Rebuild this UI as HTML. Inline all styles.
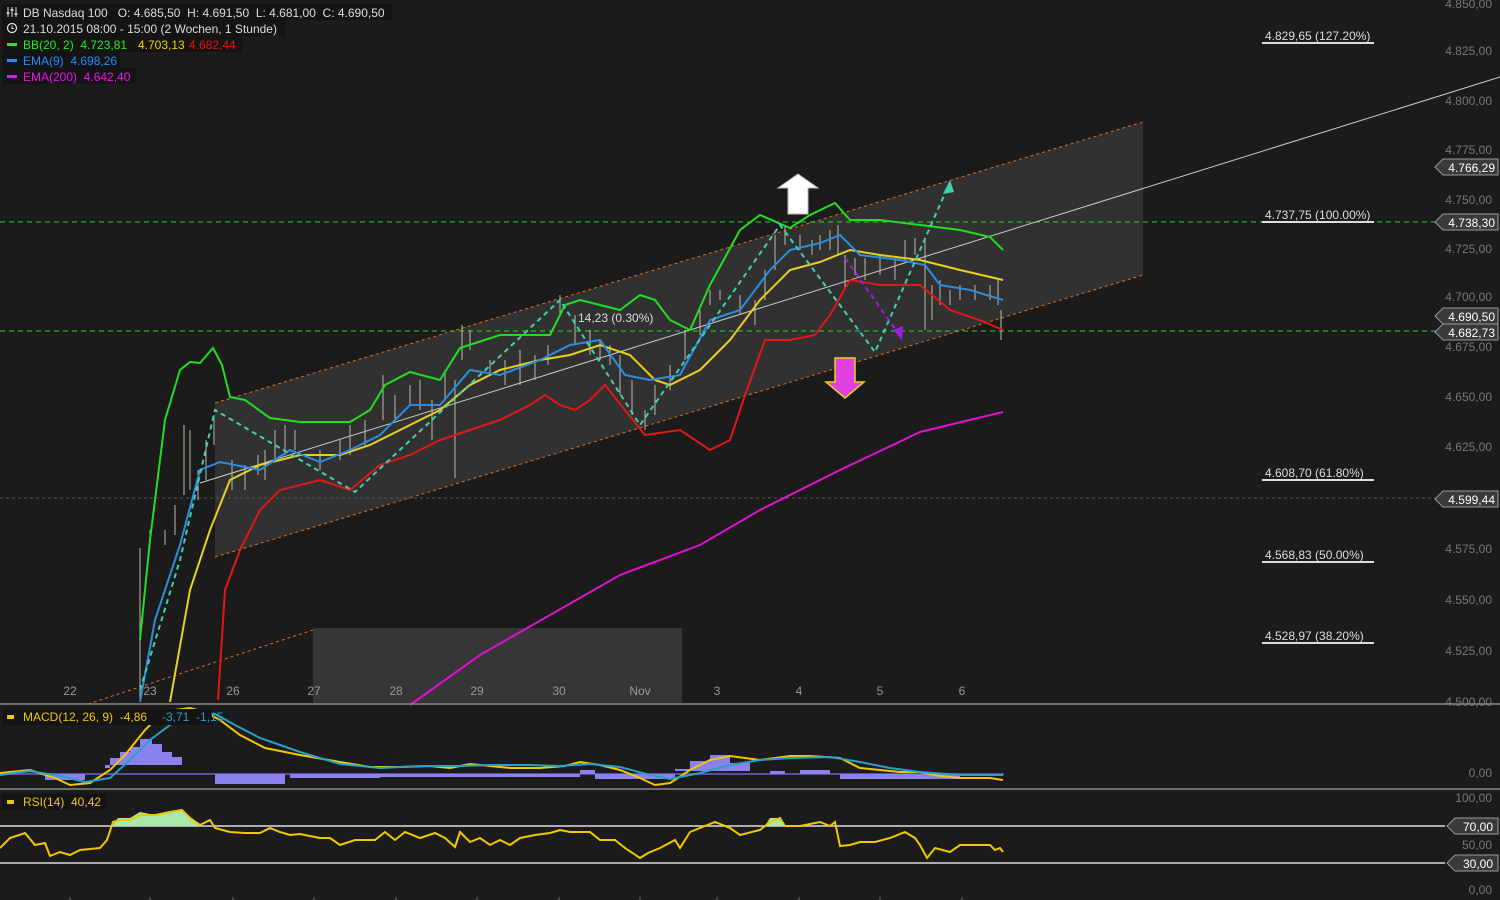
<!DOCTYPE html><html><head><style>
html,body{margin:0;padding:0;background:#1c1b1b;width:1500px;height:900px;overflow:hidden;font-family:"Liberation Sans",sans-serif}
svg{display:block}
text{font-family:"Liberation Sans",sans-serif;white-space:pre}
</style></head><body>
<svg width="1500" height="900" viewBox="0 0 1500 900" xmlns="http://www.w3.org/2000/svg" xml:space="preserve">
<rect width="1500" height="900" fill="#1c1b1b"/>
<polygon points="215,403 1143,122 1143,275 215,557" fill="#3a3a3a" opacity="0.75"/>
<rect x="313" y="628" width="369" height="75" fill="#363636"/>
<line x1="215" y1="403" x2="1143" y2="122" stroke="#e07020" stroke-dasharray="3,3"/>
<line x1="215" y1="557" x2="1143" y2="275" stroke="#e07020" stroke-dasharray="3,3"/>
<line x1="88" y1="704" x2="313" y2="630" stroke="#e07020" stroke-dasharray="3,3"/>
<line x1="0" y1="222" x2="1440" y2="222" stroke="#22dd22" stroke-dasharray="5,4"/>
<line x1="0" y1="331" x2="1440" y2="331" stroke="#22dd22" stroke-dasharray="5,4"/>
<line x1="0" y1="498" x2="1440" y2="498" stroke="#555" stroke-dasharray="3,3"/>
<line x1="1262" y1="43" x2="1374" y2="43" stroke="#ddd" stroke-width="2"/>
<line x1="1262" y1="222" x2="1374" y2="222" stroke="#ddd" stroke-width="2"/>
<line x1="1262" y1="480" x2="1374" y2="480" stroke="#ddd" stroke-width="2"/>
<line x1="1262" y1="562" x2="1374" y2="562" stroke="#ddd" stroke-width="2"/>
<line x1="1262" y1="643" x2="1374" y2="643" stroke="#ddd" stroke-width="2"/>
<g fill="#ddd" font-size="12">
<text x="1265" y="40">4.829,65 (127.20%)</text>
<text x="1265" y="219">4.737,75 (100.00%)</text>
<text x="1265" y="477">4.608,70 (61.80%)</text>
<text x="1265" y="559">4.568,83 (50.00%)</text>
<text x="1265" y="640">4.528,97 (38.20%)</text>
<text x="578" y="322">14,23 (0.30%)</text>
</g>
<line x1="200" y1="483" x2="1500" y2="77" stroke="#ccc"/>
<g stroke="#bba" stroke-width="1">
<path d="M140 548V700M150 530V548M165 530V545M175 505V535M184 425V495M190 430V490M198 470V500M206 440V480M214 415V445M232 460V490M245 465V490M258 455V475M265 450V480M275 430V460M285 425V455M295 430V450M320 450V470M340 440V460M350 425V455M365 420V445M383 375V420M395 395V420M410 385V405M420 380V410M432 400V440M445 370V400M455 380V478M462 325V360M470 330V350M490 360V375M505 360V385M520 350V385M535 355V380M548 345V365M560 295V315M575 315V345M590 330V355M600 340V360M610 345V365M620 355V395M632 380V415M645 410V430M655 385V415M670 365V390M685 330V360M700 310V335M710 290V305M720 290V300M740 295V315M755 300V325M765 270V300M775 235V270M785 225V245M800 235V250M812 240V255M820 235V250M830 230V250M838 225V255M845 255V290M855 258V275M865 258V280M880 255V275M895 260V280M905 240V260M915 238V255M925 240V330M932 285V320M940 280V305M950 290V305M960 285V300M975 285V300M990 285V300M998 280V305M1001 310V340"/>
</g>
<g fill="none" stroke-width="2">
<polyline stroke="#22dd22" points="140,640 150,540 165,420 180,370 190,362 200,363 213,348 222,365 230,397 245,400 270,418 300,422 350,422 370,410 385,385 410,372 440,380 460,348 500,335 550,335 565,305 580,300 600,305 620,310 640,295 655,300 670,320 690,330 710,285 740,230 760,215 790,228 810,215 835,203 850,220 880,220 920,225 960,230 990,237 1003,250"/>
<polyline stroke="#e01818" points="218,700 225,590 240,550 260,510 280,490 320,480 350,490 380,465 410,455 440,440 470,430 500,420 530,405 545,395 560,405 575,410 590,400 605,385 625,410 645,435 680,430 710,450 730,440 745,395 765,340 790,340 815,335 830,315 850,280 880,285 920,285 950,310 985,322 1003,330"/>
<polyline stroke="#e8d020" points="170,702 190,590 210,530 230,480 260,465 300,455 340,455 370,445 410,425 440,410 470,385 500,370 540,360 570,355 600,345 630,355 655,380 670,385 700,370 730,340 760,300 790,270 820,262 850,250 880,255 920,260 960,270 1003,280"/>
<polyline stroke="#2a8de0" points="140,702 155,620 180,545 200,470 220,462 260,470 290,450 320,462 350,450 380,435 410,405 440,405 470,370 500,375 540,360 570,345 600,340 625,375 650,380 680,375 710,320 740,310 770,270 790,250 820,243 840,235 860,255 900,260 925,265 940,285 970,290 1003,300"/>
<polyline stroke="#e010d0" points="410,705 480,655 550,615 620,575 700,545 760,510 840,470 920,432 1003,412"/>
</g>
<polyline fill="none" stroke="#40d0b0" stroke-width="2" stroke-dasharray="5,4" points="140,690 180,560 215,410 355,492 560,300 640,425 780,225 875,352 950,182"/>
<polygon points="950,180 943,194 954,192" fill="#40d0b0"/>
<line x1="845" y1="258" x2="898" y2="333" stroke="#a020e0" stroke-width="2" stroke-dasharray="5,4"/>
<polygon points="902,340 893,330 903,326" fill="#a020e0"/>
<polygon points="798,174 818,188 808,188 808,214 788,214 788,188 778,188" fill="#fff" stroke="#bbb"/>
<polygon points="835,358 855,358 855,382 864,382 845,398 826,382 835,382" fill="#e040e0" stroke="#e8d020" stroke-width="1.5"/>
<g fill="#999" font-size="12" text-anchor="middle">
<text x="70" y="695">22</text><text x="150" y="695">23</text><text x="233" y="695">26</text><text x="314" y="695">27</text><text x="396" y="695">28</text><text x="477" y="695">29</text><text x="559" y="695">30</text><text x="640" y="695">Nov</text><text x="717" y="695">3</text><text x="799" y="695">4</text><text x="880" y="695">5</text><text x="962" y="695">6</text>
</g>
<g fill="#777" font-size="12" text-anchor="end">
<text x="1492" y="8">4.850,00</text><text x="1492" y="55">4.825,00</text><text x="1492" y="105">4.800,00</text><text x="1492" y="154">4.775,00</text><text x="1492" y="204">4.750,00</text><text x="1492" y="253">4.725,00</text><text x="1492" y="301">4.700,00</text><text x="1492" y="351">4.675,00</text><text x="1492" y="401">4.650,00</text><text x="1492" y="451">4.625,00</text><text x="1492" y="553">4.575,00</text><text x="1492" y="604">4.550,00</text><text x="1492" y="655">4.525,00</text><text x="1492" y="706">4.500,00</text>
<text x="1492" y="777">0,00</text><text x="1492" y="802">100,00</text><text x="1492" y="849">50,00</text><text x="1492" y="894">0,00</text>
</g>
<g fill="#3a3a3a" stroke="#999">
<polygon points="1435,167 1443,159 1498,159 1498,175 1443,175"/>
<polygon points="1435,222 1443,214 1498,214 1498,230 1443,230"/>
<polygon points="1435,316 1443,308 1498,308 1498,324 1443,324"/>
<polygon points="1435,332 1443,324 1498,324 1498,340 1443,340"/>
<polygon points="1435,499 1443,491 1498,491 1498,507 1443,507"/>
<polygon points="1447,826 1455,818 1498,818 1498,834 1455,834"/>
<polygon points="1447,863 1455,855 1498,855 1498,871 1455,871"/>
</g>
<g fill="#fff" font-size="12" text-anchor="end">
<text x="1495" y="172">4.766,29</text><text x="1495" y="227">4.738,30</text><text x="1495" y="321">4.690,50</text><text x="1495" y="337">4.682,73</text><text x="1495" y="504">4.599,44</text><text x="1493" y="831">70,00</text><text x="1493" y="868">30,00</text>
</g>
<rect x="2" y="4" width="390" height="16" fill="#141414"/>
<rect x="2" y="20" width="284" height="16" fill="#141414"/>
<rect x="2" y="36" width="240" height="16" fill="#141414"/>
<rect x="2" y="52" width="118" height="16" fill="#141414"/>
<rect x="2" y="68" width="134" height="16" fill="#141414"/>
<g font-size="12">
<path d="M8 7v10M12 7v10M16 7v10" stroke="#ddd" stroke-width="1"/><path d="M6.5 13h3M10.5 10h3M14.5 14h3" stroke="#ddd" stroke-width="1.5"/>
<text x="23" y="17" fill="#ddd">DB Nasdaq 100   O: 4.685,50  H: 4.691,50  L: 4.681,00  C: 4.690,50</text>
<circle cx="12" cy="28" r="4.5" fill="none" stroke="#ddd" stroke-width="1.3"/><path d="M12 25.5V28.5H14" stroke="#ddd" fill="none"/>
<text x="23" y="33" fill="#ddd">21.10.2015 08:00 - 15:00 (2 Wochen, 1 Stunde)</text>
<rect x="7" y="43" width="10" height="3" fill="#22ee22"/><text x="23" y="49" fill="#22ee22">BB(20, 2)  4.723,81</text><text x="138" y="49" fill="#f0d000">4.703,13</text><text x="189" y="49" fill="#ee1111">4.682,44</text>
<rect x="7" y="59" width="10" height="3" fill="#1e90ff"/><text x="23" y="65" fill="#1e90ff">EMA(9)  4.698,26</text>
<rect x="7" y="75" width="10" height="3" fill="#ee11ee"/><text x="23" y="81" fill="#ee11ee">EMA(200)  4.642,40</text>
</g>
<line x1="0" y1="704" x2="1500" y2="704" stroke="#888" stroke-width="1.5"/>
<line x1="0" y1="789" x2="1500" y2="789" stroke="#888" stroke-width="1.5"/>
<line x1="0" y1="774" x2="1004" y2="774" stroke="#5a50a0" stroke-width="2"/>
<g fill="#8a80ee">
<path d="M45 774h40v6h-40z M105 774v-6h5v-10h10v-6h10v-5h10v-8h12v5h10v8h10v5h10v8h-77z M215 774h70v10h-70z M290 774h90v4h-90z M380 774h200v3h-200z M580 774v-4h15v4z M595 774h80v5h-80z M675 774v-5h15v-8h20v-6h20v8h20v8h-75z M770 774v-3h15v3z M800 774v-4h30v4z M840 774h120v5h-120z"/>
</g>
<polyline fill="none" stroke="#f0c800" stroke-width="2" points="0,773 30,770 55,778 70,785 90,783 110,770 125,755 145,730 160,715 175,710 190,708 205,712 220,720 240,735 265,748 300,755 340,762 370,767 400,767 430,766 450,768 470,764 490,766 510,768 540,768 565,766 580,762 600,765 620,770 640,778 655,785 670,783 690,770 710,760 730,756 760,760 790,756 810,756 840,758 860,768 880,770 900,772 920,772 940,776 960,778 990,778 1003,780"/>
<polyline fill="none" stroke="#2aa0c8" stroke-width="2" points="0,775 30,771 60,776 85,782 110,778 130,760 150,740 170,725 190,714 215,714 235,725 260,738 300,752 340,764 380,768 420,766 460,766 490,765 530,765 560,766 590,764 620,767 650,775 670,779 700,773 730,765 760,760 790,758 830,757 860,762 890,768 920,772 960,775 1003,775"/>
<rect x="2" y="709" width="210" height="16" fill="#141414"/>
<rect x="7" y="715" width="7" height="4" fill="#f0c800"/>
<text x="23" y="721" font-size="12" fill="#f0c800">MACD(12, 26, 9)  -4,86</text><text x="162" y="721" font-size="12" fill="#2aa0c8">-3,71  -1,15</text>
<line x1="0" y1="826" x2="1445" y2="826" stroke="#ddd" stroke-width="1.5"/>
<line x1="0" y1="863" x2="1445" y2="863" stroke="#ddd" stroke-width="1.5"/>
<polygon points="112,826 118,818 130,818 140,812 155,815 170,812 182,810 190,818 200,826" fill="#a8e8a8"/>
<polygon points="765,826 770,818 780,818 785,826" fill="#a8e8a8"/>
<polyline fill="none" stroke="#f0c800" stroke-width="2" points="0,848 10,838 25,833 35,845 45,843 50,856 60,852 70,855 80,850 100,848 107,840 113,822 120,820 130,820 140,815 155,815 170,812 182,810 190,818 200,825 210,820 215,828 230,832 245,833 260,833 270,828 280,832 290,835 300,834 320,838 330,838 340,845 355,840 375,840 385,832 395,840 405,832 420,838 435,833 445,838 455,847 460,832 470,842 480,838 490,845 500,840 510,845 520,838 535,835 550,833 560,830 570,832 590,832 600,840 615,840 625,848 640,858 648,853 660,848 675,840 680,848 690,832 700,828 715,822 730,828 740,835 760,830 770,822 780,818 785,826 800,826 820,822 830,826 835,822 840,846 850,845 860,842 875,842 890,838 905,832 915,838 920,845 927,858 935,848 950,852 960,845 990,845 995,850 1000,848 1003,852"/>
<rect x="2" y="794" width="104" height="16" fill="#141414"/>
<rect x="7" y="800" width="7" height="4" fill="#f0c800"/>
<text x="23" y="806" font-size="12" fill="#f0c800">RSI(14)  40,42</text>
<g stroke="#666"><path d="M70 897v3M150 897v3M233 897v3M314 897v3M396 897v3M477 897v3M559 897v3M640 897v3M717 897v3M799 897v3M880 897v3M962 897v3"/></g>
</svg>
</body></html>
